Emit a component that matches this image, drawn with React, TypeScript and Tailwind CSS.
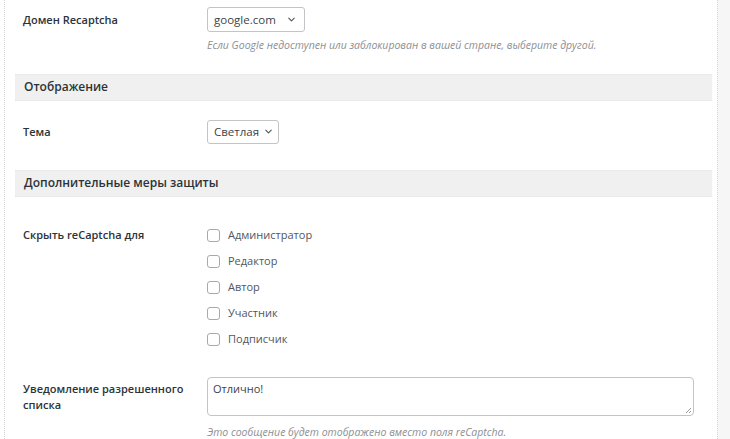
import { ChevronDown } from "lucide-react";

const roles = ["Администратор", "Редактор", "Автор", "Участник", "Подписчик"];

function SectionHeader({ title }: { title: string }) {
  return (
    <div className="ml-[10px] flex h-[27px] w-[697px] items-center border-y border-dotted border-[#e4e4e4] bg-[#f0f0f0] pl-[9px] text-[12px] font-semibold text-[#2c3338]">
      {title}
    </div>
  );
}

function Select({ value, width }: { value: string; width: string }) {
  return (
    <div
      className={`flex shrink-0 items-center justify-between gap-[4px] rounded-[3px] border border-[#c3c4c7] bg-white pl-[6px] pr-[7px] text-[11.5px] text-[#3c434a] ${width}`}
    >
      <span>{value}</span>
      <ChevronDown size={11} strokeWidth={2.5} className="shrink-0 text-[#50575e]" />
    </div>
  );
}

export default function App() {
  return (
    <div
      className="flex h-[439px] w-[730px] overflow-hidden bg-white"
      style={{ fontFamily: '"Open Sans", "Noto Sans", sans-serif' }}
    >
      <div className="ml-[4px] flex w-[713px] flex-col border-l border-dotted border-[#d6d6d6]">
        <div className="flex pt-[7px]">
          <div className="w-[202px] shrink-0 pl-[18px] pt-[5px] text-[11px] font-semibold text-[#2c3338]">
            Домен Recaptcha
          </div>
          <div className="flex flex-col">
            <Select value="google.com" width="h-[25px] w-[98px]" />
            <p className="mt-[6px] text-[10.5px] italic text-[#8c8f94]">
              Если Google недоступен или заблокирован в вашей стране, выберите другой.
            </p>
          </div>
        </div>

        <div className="mt-[20px]">
          <SectionHeader title="Отображение" />
        </div>

        <div className="flex pt-[19px]">
          <div className="w-[202px] shrink-0 pl-[18px] pt-[4px] text-[11px] font-semibold text-[#2c3338]">
            Тема
          </div>
          <Select value="Светлая" width="h-[24px] w-[72px]" />
        </div>

        <div className="mt-[26px]">
          <SectionHeader title="Дополнительные меры защиты" />
        </div>

        <div className="flex pt-[30px]">
          <div className="w-[202px] shrink-0 pl-[18px] text-[11px] font-semibold text-[#2c3338]">
            Скрыть reCaptcha для
          </div>
          <div className="flex flex-col gap-[9px]">
            {roles.map((role) => (
              <label key={role} className="flex h-[17px] items-center gap-[8px] text-[11px] text-[#50575e]">
                <span className="h-[13px] w-[13px] rounded-[3px] border border-[#a7aaad] bg-white" />
                {role}
              </label>
            ))}
          </div>
        </div>

        <div className="flex pt-[29px]">
          <div className="w-[202px] shrink-0 pl-[18px] pt-[4px] text-[11px] font-semibold leading-[16px] text-[#2c3338]">
            Уведомление разрешенного
            <br />
            списка
          </div>
          <div className="flex flex-col">
            <div className="relative h-[39px] w-[487px] rounded-[4px] border border-[#c3c4c7] px-[5px] pt-[3px] text-[11px] text-[#3c434a]">
              Отлично!
              <svg
                className="absolute bottom-[1px] right-[1px]"
                width="7"
                height="7"
                viewBox="0 0 7 7"
              >
                <path d="M6 1 L1 6 M6 4 L4 6" stroke="#9a9a9a" strokeWidth="1" />
              </svg>
            </div>
            <p className="mt-[9px] text-[10.5px] italic text-[#8c8f94]">
              Это сообщение будет отображено вместо поля reCaptcha.
            </p>
          </div>
        </div>
      </div>
      <div className="flex-1 border-l border-dotted border-[#d6d6d6] bg-[#f6f6f6]" />
    </div>
  );
}
